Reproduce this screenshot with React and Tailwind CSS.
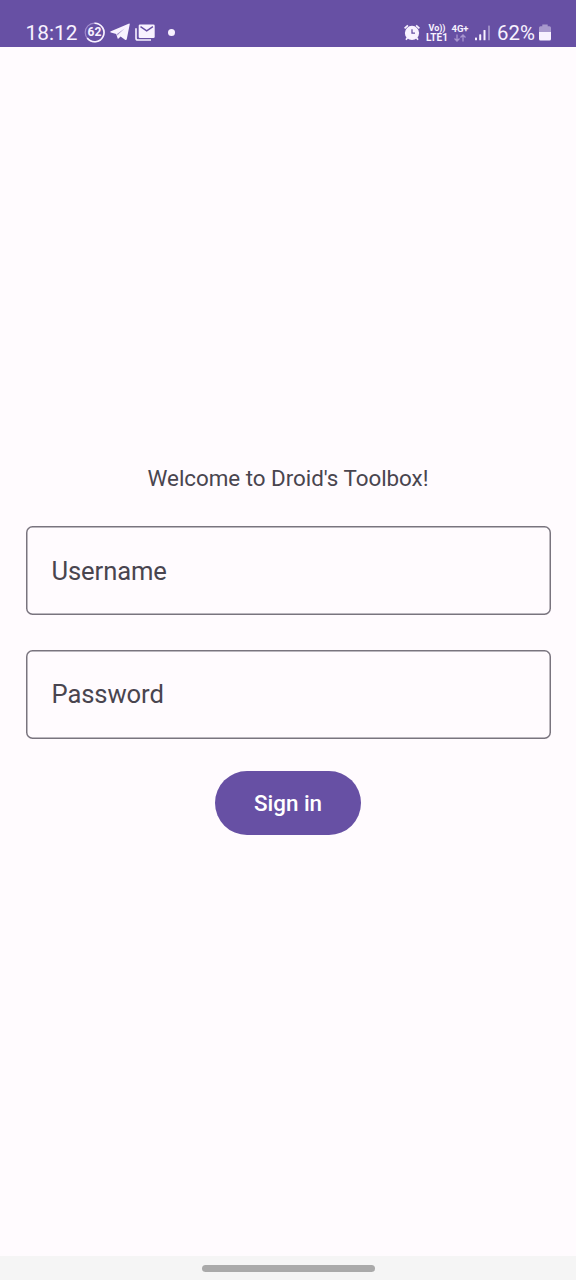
import React from 'react';

function LevelBadge() {
  return (
    <div className="relative ml-[6px] flex h-[21px] w-[21px] items-center justify-center">
      <svg viewBox="0 0 21 21" className="absolute inset-0 h-[21px] w-[21px]" fill="none">
        <circle cx="10.5" cy="10.5" r="9.3" stroke="#a18cce" strokeWidth="1.2" />
        <path d="M10.5 1.2A9.3 9.3 0 1 1 3.2 16" stroke="#f8f2ff" strokeWidth="1.6" />
      </svg>
      <span className="relative text-[12px] leading-none font-bold">62</span>
    </div>
  );
}

function PlaneIcon() {
  return (
    <svg viewBox="0 0 20 18" className="ml-[5px] h-[18px] w-5" fill="#f8f2ff">
      <path d="M18.6.7Q19.9.2 19.7 1.4L16.8 16q-.4 1.6-1.8.7l-4.4-3.2-2.1 2q-.7.6-.9-.3L6.2 11 .9 9.5Q-.4 8.9.9 8.2Z" />
      <path d="M7 11 14.6 5.6 8.3 11.2 8 12.8Z" fill="#6750a4" opacity=".65" />
    </svg>
  );
}

function MailIcon() {
  return (
    <svg viewBox="0 0 20 17" className="ml-[5px] h-[17px] w-5" fill="none">
      <path d="M1 4.3V14.2Q1 16 2.8 16H16" stroke="#f8f2ff" strokeWidth="1.6" />
      <rect x="3.7" y="0.4" width="16" height="13.6" rx="1.3" fill="#f8f2ff" />
      <path d="M5.5 2.6 11.7 6.8 17.9 2.6" stroke="#6750a4" strokeWidth="1.5" />
    </svg>
  );
}

function AlarmIcon() {
  return (
    <svg viewBox="0 0 16 17" className="h-[17px] w-4" fill="none" stroke="#f8f2ff">
      <circle cx="8" cy="8.9" r="7.1" fill="#f8f2ff" stroke="none" />
      <path d="M.6 4.4 3.9 1.3M15.4 4.4 12.1 1.3M3.6 13.5 2 15.8M12.4 13.5 14 15.8" strokeWidth="1.7" />
      <path d="M8 5.2V9.2H11" stroke="#6750a4" strokeWidth="1.3" />
    </svg>
  );
}

function SignalIcon() {
  return (
    <svg viewBox="0 0 16 16" className="ml-[6px] h-4 w-4" fill="#f8f2ff">
      <rect x="0" y="12.5" width="2" height="2.8" rx=".6" />
      <rect x="4.2" y="9.3" width="2" height="6" rx=".6" />
      <rect x="8.5" y="5" width="2" height="10.3" rx=".6" />
      <rect x="13" y="0.5" width="2" height="14.8" rx=".6" opacity=".38" />
    </svg>
  );
}

function BatteryIcon() {
  return (
    <svg viewBox="0 0 12 17" className="ml-[3px] h-[17px] w-3" fill="#f8f2ff">
      <path d="M3.3.5H8.7V2.2H10.5Q12 2.2 12 3.7V8H0V3.7Q0 2.2 1.5 2.2H3.3Z" opacity=".45" />
      <path d="M0 8H12V15Q12 16.5 10.5 16.5H1.5Q0 16.5 0 15Z" />
    </svg>
  );
}

function StatusBar() {
  return (
    <header className="flex h-[47px] shrink-0 items-center justify-between bg-[#6750a4] px-[25px] pt-[18px] text-[#f8f2ff]">
      <div className="flex items-center">
        <span className="w-[53px] pt-[2px] pl-[0.6px] text-[20.8px] leading-none whitespace-nowrap">18:12</span>
        <LevelBadge />
        <PlaneIcon />
        <MailIcon />
        <span className="ml-[13px] h-[7px] w-[7px] rounded-full bg-[#f8f2ff]" />
      </div>
      <div className="flex items-center">
        <AlarmIcon />
        <div className="ml-[6px] flex w-[22px] flex-col items-center text-[10px] leading-[9px] font-bold whitespace-nowrap">
          <span className="text-[9px]">Vo))</span>
          <span>LTE1</span>
        </div>
        <div className="ml-[3px] flex w-[18px] flex-col items-center">
          <span className="text-[9.5px] leading-[9px] font-bold">4G+</span>
          <svg viewBox="0 0 12 8" className="mt-px h-2 w-3" fill="none" stroke="#a895cf" strokeWidth="1.3">
            <path d="M3 .5V7M.5 4.5 3 7 5.5 4.5M9 7.5V1M6.5 3.5 9 1 11.5 3.5" />
          </svg>
        </div>
        <SignalIcon />
        <span className="ml-[6px] w-[39px] pt-[2px] text-[20.4px] leading-none whitespace-nowrap">62%</span>
        <BatteryIcon />
      </div>
    </header>
  );
}

function Field({ label, type }) {
  return (
    <input
      type={type}
      placeholder={label}
      aria-label={label}
      className="h-[89px] w-full rounded-[6.5px] bg-transparent px-[26px] text-[25.6px] tracking-[-0.1px] text-[#49454f] shadow-[inset_0_0_0_1.5px_#79747e] outline-none placeholder:text-[#49454f] placeholder:opacity-100"
    />
  );
}

export default function App() {
  return (
    <div className="flex h-[1280px] w-[576px] flex-col bg-[#fffbfe] font-['Roboto',sans-serif]">
      <StatusBar />
      <main className="flex flex-1 flex-col items-center px-[25.5px] pt-[415px]">
        <h1 className="text-[22.4px] leading-8 font-normal tracking-[-0.03px] whitespace-nowrap text-[#49454f]">
          Welcome to Droid's Toolbox!
        </h1>
        <div className="mt-[32.3px] flex w-full flex-col gap-[34.5px]">
          <Field label="Username" type="text" />
          <Field label="Password" type="password" />
        </div>
        <button className="mt-[31.8px] h-16 w-[146px] rounded-full bg-[#6750a4] pt-[2px] text-[22.4px] font-medium text-white">
          Sign in
        </button>
      </main>
      <footer className="flex h-6 shrink-0 items-center justify-center bg-[#f5f5f5]">
        <div className="h-[7px] w-[173px] rounded-full bg-[#aaaaaa]" />
      </footer>
    </div>
  );
}
